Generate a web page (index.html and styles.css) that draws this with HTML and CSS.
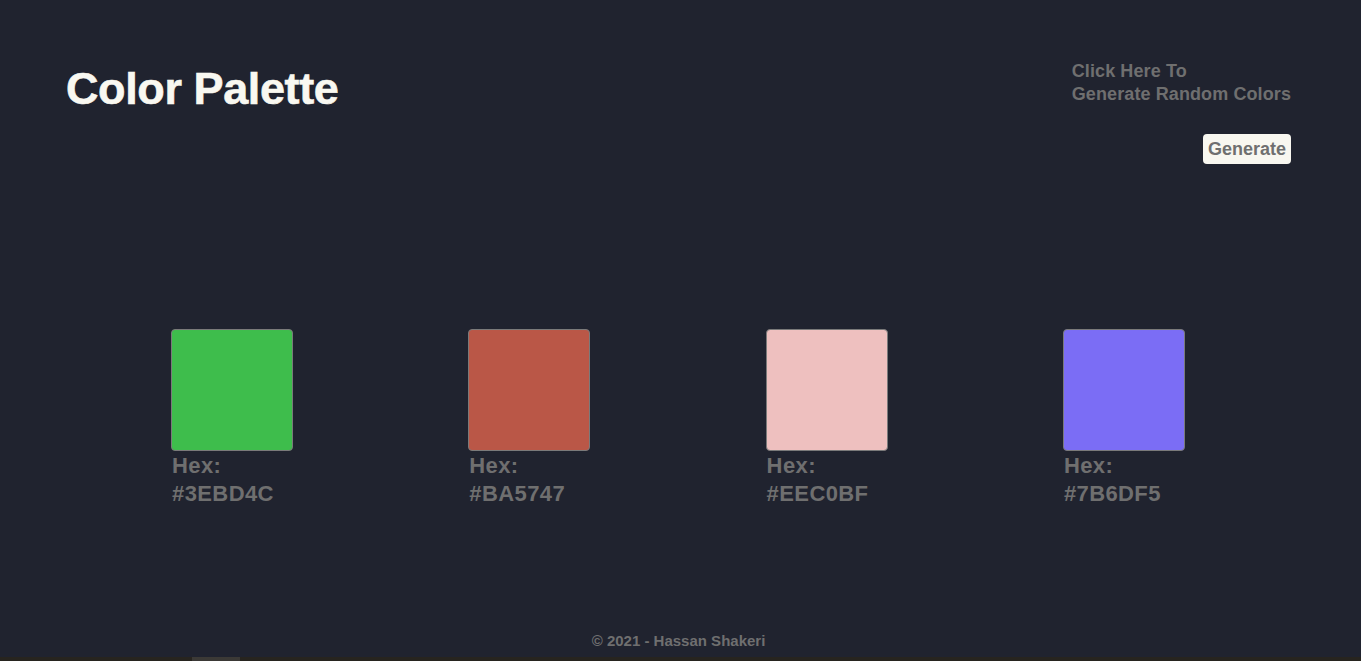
FILE: index.html
```html
<!DOCTYPE html>
<html lang="en">
<head>
<meta charset="utf-8">
<title>Color Palette</title>
<link rel="stylesheet" href="styles.css">
</head>
<body>
  <header class="header">
    <h1 class="title">Color Palette</h1>
    <div class="actions">
      <p class="hint">Click Here To<br>Generate Random Colors</p>
      <button class="btn" type="button">Generate</button>
    </div>
  </header>
  <main class="palette">
    <div class="color">
      <div class="swatch" style="background:#3EBD4C"></div>
      <p class="label">Hex:<br>#3EBD4C</p>
    </div>
    <div class="color">
      <div class="swatch" style="background:#BA5747"></div>
      <p class="label">Hex:<br>#BA5747</p>
    </div>
    <div class="color">
      <div class="swatch" style="background:#EEC0BF"></div>
      <p class="label">Hex:<br>#EEC0BF</p>
    </div>
    <div class="color">
      <div class="swatch" style="background:#7B6DF5"></div>
      <p class="label">Hex:<br>#7B6DF5</p>
    </div>
  </main>
  <footer class="footer">
    <p class="copy">© 2021 - Hassan Shakeri</p>
    <div class="strip"><span class="strip-thumb"></span></div>
  </footer>
</body>
</html>
```

FILE: styles.css
```css
* { box-sizing: border-box; }

html, body {
  margin: 0;
  padding: 0;
}

body {
  background: #20232f;
  font-family: "Liberation Sans", Arial, sans-serif;
  font-weight: 700;
  color: #6f6f6f;
  height: 661px;
  overflow: hidden;
  display: flex;
  flex-direction: column;
}

.header {
  display: flex;
  justify-content: space-between;
  align-items: flex-start;
  padding: 60px 70px 0 66px;
}

.title {
  margin: 0;
  padding-top: 3px;
  font-size: 45px;
  line-height: 52px;
  color: #f9f8f1;
  font-weight: 700;
  letter-spacing: -0.4px;
  -webkit-text-stroke: 0.6px #f9f8f1;
}

.actions {
  display: flex;
  flex-direction: column;
  align-items: flex-end;
}

.hint {
  margin: 0;
  font-size: 18px;
  line-height: 23px;
  color: #6f6f6f;
  letter-spacing: 0.1px;
  align-self: flex-start;
}

.btn {
  margin-top: 28px;
  height: 30px;
  padding: 0 5px;
  border: none;
  border-radius: 4px;
  background: #f8f7f0;
  color: #6f6f6f;
  font-family: "Liberation Sans", Arial, sans-serif;
  font-weight: 700;
  font-size: 18px;
  line-height: 20px;
}

.palette {
  display: grid;
  grid-template-columns: repeat(4, 122px);
  column-gap: 175.3px;
  padding-left: 171px;
  margin-top: 165px;
}

.swatch {
  width: 122px;
  height: 122px;
  border: 1px solid #7a7a7a;
  border-radius: 4px;
}

.label {
  margin: 1px 0 0 1px;
  font-size: 22px;
  line-height: 28px;
  letter-spacing: 0.4px;
  color: #6f6f6f;
  white-space: nowrap;
}

.footer {
  margin-top: auto;
  display: flex;
  flex-direction: column;
  align-items: center;
}

.copy {
  margin: 0 0 8px 0;
  font-size: 15px;
  line-height: 17px;
  color: #6f6f6f;
  transform: translateX(-2px);
}

.strip {
  align-self: stretch;
  height: 4px;
  background: #27241f;
  display: flex;
}

.strip-thumb {
  margin-left: 192px;
  width: 48px;
  background: #3b3936;
}
```
